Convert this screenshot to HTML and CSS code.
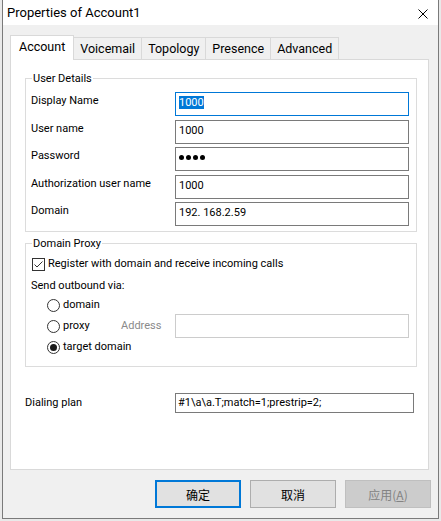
FILE: index.html
```html
<!DOCTYPE html>
<html>
<head>
<meta charset="utf-8">
<title>Properties of Account1</title>
<link rel="stylesheet" href="styles.css">
</head>
<body>
<div class="window">
  <div class="titlebar">
    <span class="title">Properties of Account1</span>
    <svg class="close" width="10" height="10" viewBox="0 0 10 10"><path d="M0.5 0.5L9.5 9.5M9.5 0.5L0.5 9.5" stroke="#000" stroke-width="1" fill="none"/></svg>
  </div>
  <div class="tabs">
    <div class="tab active">Account</div>
    <div class="tab">Voicemail</div>
    <div class="tab">Topology</div>
    <div class="tab">Presence</div>
    <div class="tab">Advanced</div>
  </div>
  <div class="panel">
    <div class="group details">
      <div class="legend">User Details</div>
      <div class="form">
        <div class="label">Display Name</div>
        <div class="field focus"><span class="sel">1000</span></div>
        <div class="label">User name</div>
        <div class="field">1000</div>
        <div class="label">Password</div>
        <div class="field pw"><span class="dot"></span><span class="dot"></span><span class="dot"></span><span class="dot"></span></div>
        <div class="label">Authorization user name</div>
        <div class="field">1000</div>
        <div class="label">Domain</div>
        <div class="field">192. 168.2.59</div>
      </div>
    </div>
    <div class="group proxy">
      <div class="legend">Domain Proxy</div>
      <div class="check-row">
        <span class="checkbox"><svg width="11" height="11" viewBox="0 0 11 11"><path d="M1.5 5.5L4 8L9.5 2.5" stroke="#333" stroke-width="1" fill="none"/></svg></span>
        <span>Register with domain and receive incoming calls</span>
      </div>
      <div class="send">Send outbound via:</div>
      <div class="radios">
        <div class="radio-row"><span class="radio"></span><span>domain</span></div>
        <div class="radio-row proxy-row">
          <span class="radio-label"><span class="radio"></span><span>proxy</span></span>
          <span class="addr">Address</span>
          <div class="field disabled"></div>
        </div>
        <div class="radio-row"><span class="radio on"></span><span>target domain</span></div>
      </div>
    </div>
    <div class="dial">
      <div class="label">Dialing plan</div>
      <div class="field small">#1\a\a.T;match=1;prestrip=2;</div>
    </div>
  </div>
  <div class="buttons">
    <button class="btn default">确定</button>
    <button class="btn">取消</button>
    <button class="btn disabled">应用(<u>A</u>)</button>
  </div>
</div>
</body>
</html>
```
FILE: styles.css
```css
* { box-sizing: border-box; }
html, body { margin: 0; padding: 0; }
body {
  width: 441px;
  height: 521px;
  overflow: hidden;
  background: #e9e9e9;
  font-family: Roboto, "Noto Sans CJK SC", sans-serif;
  font-size: 11px;
  color: #000;
}
.window {
  margin-left: 2px;
  width: 437px;
  height: 519px;
  border: 1px solid #7a7a7a;
  border-top: none;
  background: #f0f0f0;
}
.titlebar {
  height: 25px;
  background: #fff;
  display: flex;
  justify-content: space-between;
  padding: 0 10px 0 4px;
}
.title { font-size: 13px; line-height: 25px; }
.close { margin-top: 9px; }

.tabs {
  display: flex;
  align-items: flex-end;
  height: 25px;
  margin: 10px 0 -1px 7px;
  position: relative;
  z-index: 1;
  font-size: 12.5px;
}
.tab {
  height: 22px;
  margin-bottom: 1px;
  padding: 0 6px;
  line-height: 21px;
  border-top: 1px solid #d9d9d9;
  border-right: 1px solid #d9d9d9;
  background: #f0f0f0;
}
.tab.active {
  height: 25px;
  margin-bottom: 0;
  padding: 0 8px 3px;
  border-left: 1px solid #d9d9d9;
  background: #fff;
}

.panel {
  margin-left: 7px;
  width: 419px;
  height: 411px;
  background: #fff;
  border: 1px solid #d9d9d9;
  padding-top: 18px;
}
.group {
  margin: 0 11px 0 14px;
  border: 1px solid #dcdcdc;
}
.group.proxy { margin-top: 11px; }
.legend {
  width: fit-content;
  margin: -8px 0 0 6px;
  padding: 0 1px;
  background: #fff;
  line-height: 16px;
}
.form {
  display: grid;
  grid-template-columns: 144px 234px;
  row-gap: 3.5px;
  padding: 5px 7px 5px 5px;
}
.label { line-height: 16px; padding-top: 1px; white-space: nowrap; }
.field {
  height: 24px;
  border: 1px solid #7a7a7a;
  background: #fff;
  padding: 0 3px;
  line-height: 19px;
  white-space: nowrap;
  overflow: hidden;
}
.field.focus { border-color: #0078d7; }
.sel { background: #0078d7; color: #fff; }
.field.pw {
  display: flex;
  align-items: center;
  gap: 2px;
  padding-bottom: 3px;
}
.dot {
  width: 5px;
  height: 5px;
  border-radius: 50%;
  background: #000;
}

.check-row {
  display: flex;
  align-items: center;
  gap: 3px;
  margin: 4px 0 0 6px;
  line-height: 16px;
}
.checkbox {
  width: 13px;
  height: 13px;
  border: 1px solid #333;
  background: #fff;
  display: flex;
}
.send { margin: 6px 0 0 5px; line-height: 16px; }
.radios {
  display: flex;
  flex-direction: column;
  gap: 1px;
  margin: 3px 0 0 21px;
  padding-bottom: 11px;
}
.radio-row {
  display: flex;
  align-items: center;
  gap: 3px;
  height: 16px;
  line-height: 16px;
}
.radio-row.proxy-row { height: 24px; gap: 0; }
.radio-label {
  display: flex;
  align-items: center;
  gap: 3px;
  width: 74px;
}
.radio {
  width: 13px;
  height: 13px;
  border: 1px solid #333;
  border-radius: 50%;
  background: #fff;
  display: flex;
  align-items: center;
  justify-content: center;
}
.radio.on::after {
  content: "";
  width: 7px;
  height: 7px;
  border-radius: 50%;
  background: #1a1a1a;
}
.addr { width: 54px; color: #8a8a8a; }
.field.disabled { width: 234px; border-color: #cccccc; }

.dial {
  display: grid;
  grid-template-columns: 150px 239px;
  margin: 26px 0 0 14px;
  align-items: start;
}
.dial .label { padding-top: 2px; }
.field.small { height: 20px; line-height: 18px; padding-left: 2px; }

.buttons {
  display: flex;
  justify-content: flex-end;
  gap: 9px;
  margin-top: 10px;
  padding-right: 7px;
}
.btn {
  width: 86px;
  height: 28px;
  margin: 0;
  padding: 0;
  border: 1px solid #adadad;
  background: #e1e1e1;
  font-family: "Noto Sans CJK SC", sans-serif;
  font-size: 12px;
  color: #000;
  display: flex;
  align-items: center;
  justify-content: center;
}
.btn.default { border: 2px solid #0078d7; }
.btn.disabled { background: #cccccc; border-color: #bfbfbf; color: #838383; }
```
